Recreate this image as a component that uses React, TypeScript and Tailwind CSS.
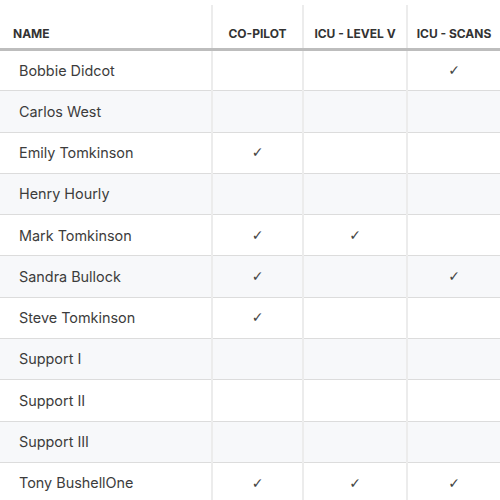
import React from 'react';

const COLUMNS = ['Co-Pilot', 'ICU - Level V', 'ICU - Scans'];

const ROWS: { name: string; checks: boolean[] }[] = [
  { name: 'Bobbie Didcot', checks: [false, false, true] },
  { name: 'Carlos West', checks: [false, false, false] },
  { name: 'Emily Tomkinson', checks: [true, false, false] },
  { name: 'Henry Hourly', checks: [false, false, false] },
  { name: 'Mark Tomkinson', checks: [true, true, false] },
  { name: 'Sandra Bullock', checks: [true, false, true] },
  { name: 'Steve Tomkinson', checks: [true, false, false] },
  { name: 'Support I', checks: [false, false, false] },
  { name: 'Support II', checks: [false, false, false] },
  { name: 'Support III', checks: [false, false, false] },
  { name: 'Tony BushellOne', checks: [true, true, true] },
];

export default function App() {
  return (
    <div className="w-[500px] h-[500px] overflow-hidden bg-white pt-[5px] text-[#333]" style={{ fontFamily: 'Inter, "Noto Sans", sans-serif' }}>
      <table className="w-[500px] table-fixed border-collapse">
        <colgroup>
          <col className="w-[212px]" />
          <col className="w-[91px]" />
          <col className="w-[104px]" />
          <col className="w-[93px]" />
        </colgroup>
        <thead>
          <tr className="h-[44.5px] border-b-[3px] border-[#bdbdbd]">
            <th className="text-left align-bottom pb-[5px] pl-[13px] text-[12px] font-bold uppercase">Name</th>
            {COLUMNS.map((c) => (
              <th key={c} className="align-bottom pb-[5px] text-[12px] font-bold uppercase whitespace-nowrap border-l-2 border-[#ececec]">
                {c}
              </th>
            ))}
          </tr>
        </thead>
        <tbody>
          {ROWS.map((r, i) => (
            <tr key={r.name} className={`h-[41.3px] border-b border-[#dcdcdc] ${i % 2 === 1 ? 'bg-[#f7f8fa]' : 'bg-white'}`}>
              <td className="pl-[19px] text-[14.4px] text-[#3c3c3c]">{r.name}</td>
              {r.checks.map((ok, j) => (
                <td key={j} className="text-center text-[14px] text-[#444] border-l-2 border-[#ececec]" style={{ fontFamily: '"DejaVu Sans", sans-serif' }}>
                  {ok ? '✓' : ''}
                </td>
              ))}
            </tr>
          ))}
        </tbody>
      </table>
    </div>
  );
}
